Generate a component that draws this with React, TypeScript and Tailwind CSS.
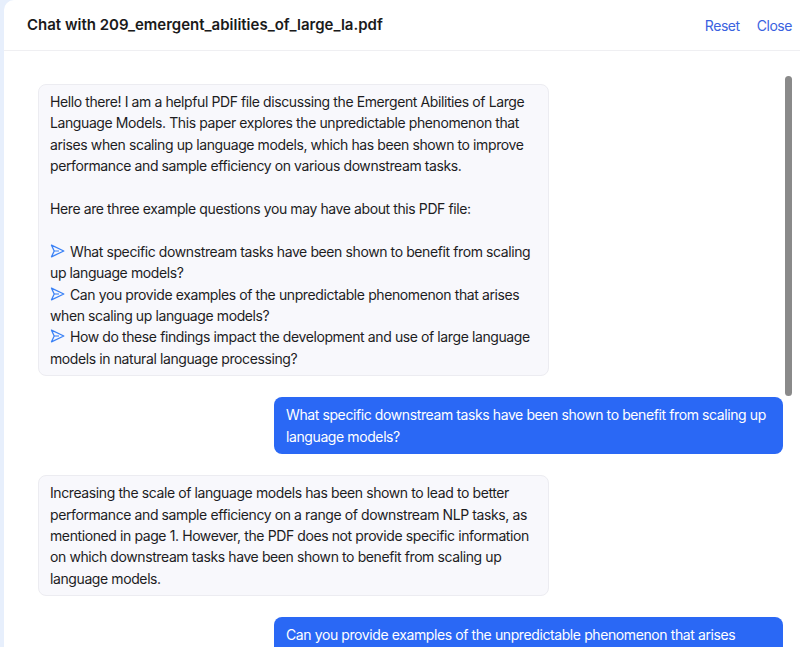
import React from "react";

type Msg = { role: "bot" | "user"; lines: React.ReactNode };

function SendIcon() {
  return (
    <svg
      width="15"
      height="14"
      viewBox="0 0 15 14"
      fill="none"
      className="inline-block align-[-1px] mr-[5px]"
    >
      <path
        d="M1.5 1.2 L13.8 7 L1.5 12.8 L4.2 7 Z"
        stroke="#3b82f6"
        strokeWidth="1.3"
        strokeLinejoin="round"
      />
      <path d="M4.2 7 H9" stroke="#3b82f6" strokeWidth="1.1" />
    </svg>
  );
}

const messages: Msg[] = [
  {
    role: "bot",
    lines: (
      <>
        Hello there! I am a helpful PDF file discussing the Emergent Abilities of Large
        Language Models. This paper explores the unpredictable phenomenon that arises when
        scaling up language models, which has been shown to improve performance and sample
        efficiency on various downstream tasks.
        <br />
        <br />
        Here are three example questions you may have about this PDF file:
        <br />
        <br />
        <SendIcon />
        What specific downstream tasks have been shown to benefit from scaling up language
        models?
        <br />
        <SendIcon />
        Can you provide examples of the unpredictable phenomenon that arises when scaling up
        language models?
        <br />
        <SendIcon />
        How do these findings impact the development and use of large language models in
        natural language processing?
      </>
    ),
  },
  {
    role: "user",
    lines:
      "What specific downstream tasks have been shown to benefit from scaling up language models?",
  },
  {
    role: "bot",
    lines:
      "Increasing the scale of language models has been shown to lead to better performance and sample efficiency on a range of downstream NLP tasks, as mentioned in page 1. However, the PDF does not provide specific information on which downstream tasks have been shown to benefit from scaling up language models.",
  },
  {
    role: "user",
    lines:
      "Can you provide examples of the unpredictable phenomenon that arises when scaling up language models?",
  },
];

export default function App() {
  return (
    <div className="h-[647px] w-[800px] overflow-hidden bg-[#e7effc] pl-[4px] font-['Inter','Liberation_Sans',sans-serif] text-[#1d1d1f]">
      <div className="relative flex h-full flex-col overflow-hidden rounded-tl-[10px] bg-white">
        {/* Header */}
        <div className="flex h-[51px] shrink-0 items-center justify-between border-b border-[#efeff2] pl-[23px] pr-[8px]">
          <h1 className="text-[15px] font-semibold text-[#1a1a1a]">
            Chat with 209_emergent_abilities_of_large_la.pdf
          </h1>
          <div className="flex items-center gap-[17px] text-[14px] tracking-[-0.45px] text-[#3a62e0]">
            <button>Reset</button>
            <button>Close</button>
          </div>
        </div>

        {/* Messages */}
        <div className="flex flex-1 flex-col gap-[21px] overflow-hidden pl-[34px] pr-[17px] pt-[33px] text-[14px] leading-[21.4px] tracking-[-0.4px]">
          {messages.map((m, i) =>
            m.role === "bot" ? (
              <div key={i} className="flex justify-start">
                <div className="w-[511px] shrink-0 rounded-[8px] border border-[#ececf1] bg-[#f8f8fc] px-[11px] py-[6px]">
                  {m.lines}
                </div>
              </div>
            ) : (
              <div key={i} className="flex justify-end">
                <div className="w-[509px] shrink-0 rounded-[8px] bg-[#2a68f5] px-[12px] py-[7px] text-white">
                  {m.lines}
                </div>
              </div>
            )
          )}
        </div>

        {/* overlay scrollbar */}
        <div className="absolute left-[781px] top-[76px] h-[320px] w-[7px] rounded-full bg-[#8a8a8a]" />
      </div>
    </div>
  );
}
